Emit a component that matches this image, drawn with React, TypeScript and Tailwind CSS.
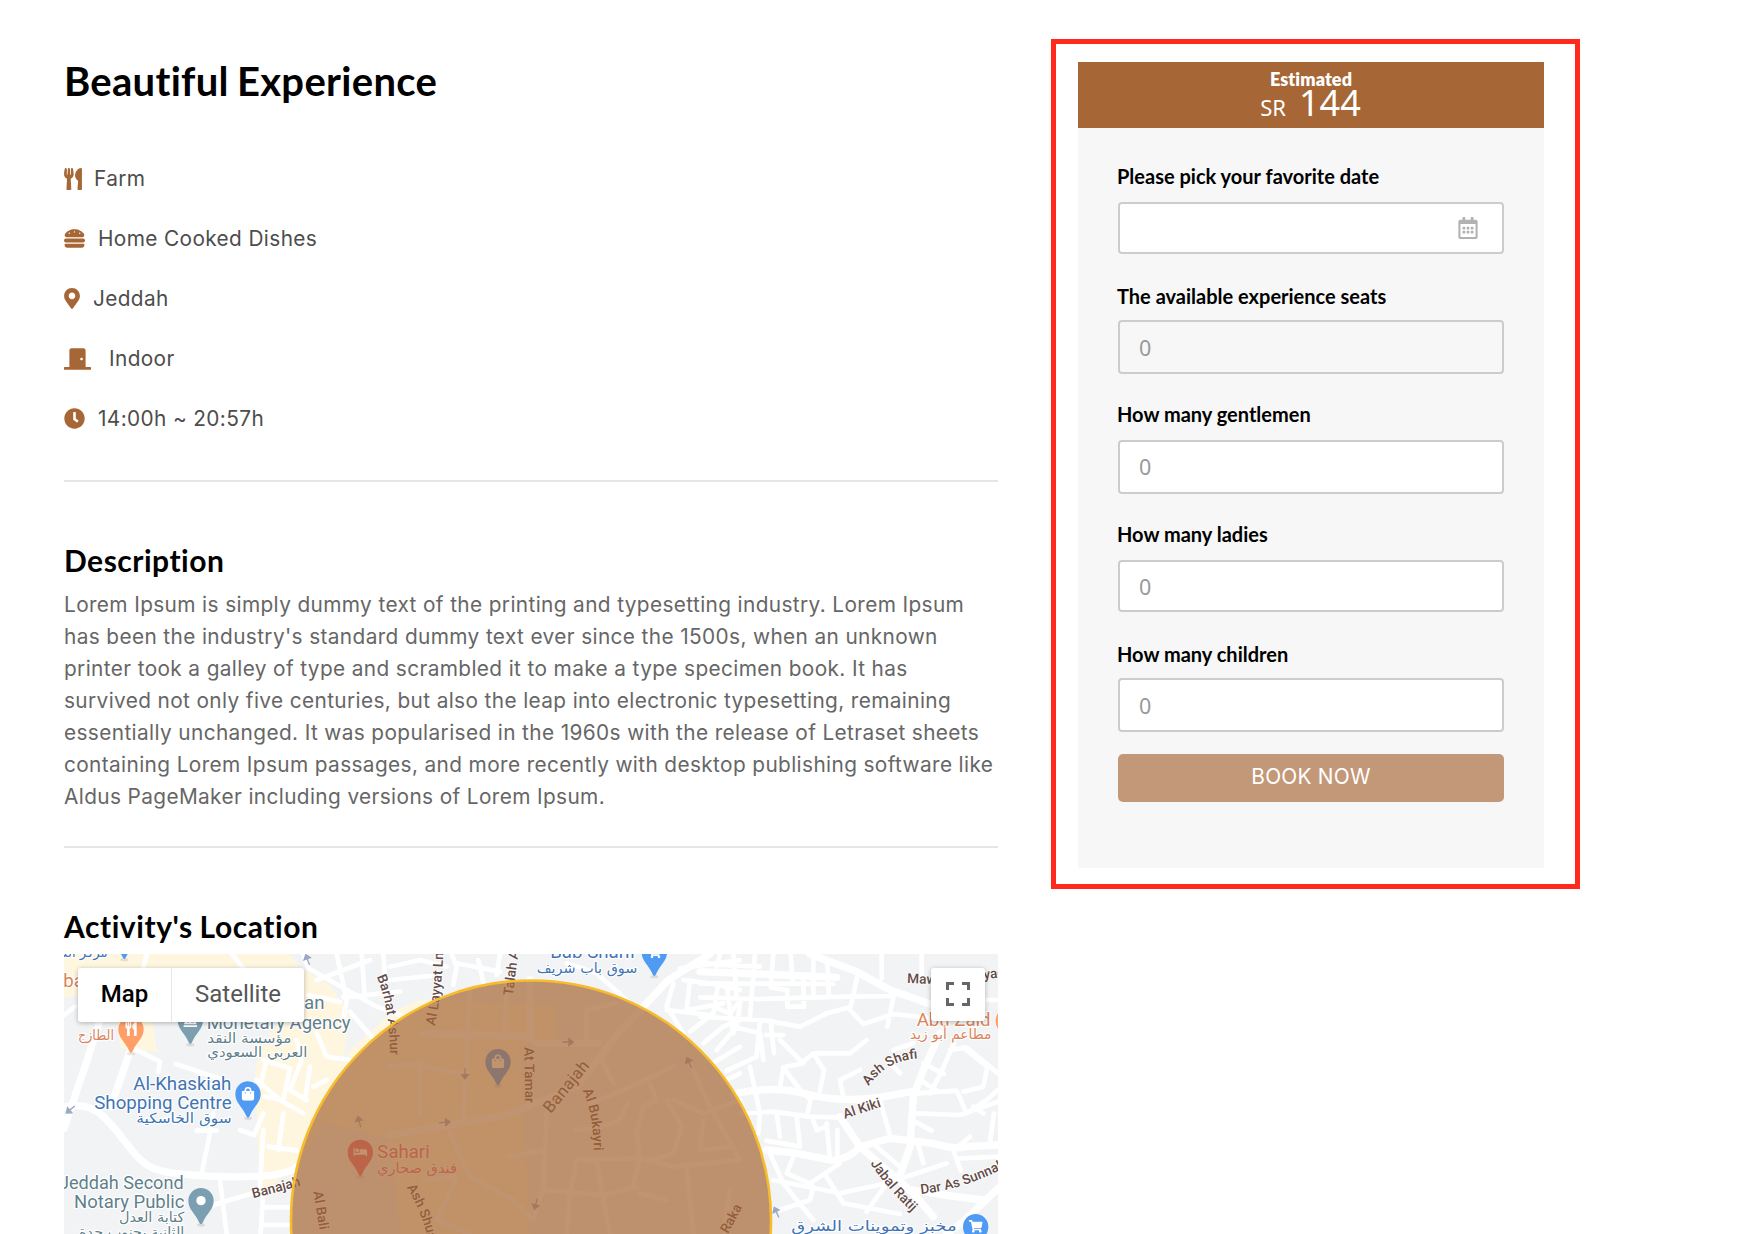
import type { ReactNode } from "react";
import type { IconType } from "react-icons";
import {
  FaBed,
  FaClock,
  FaDoorClosed,
  FaHamburger,
  FaLandmark,
  FaMapMarkerAlt,
  FaRegCalendarAlt,
  FaShoppingBag,
  FaShoppingCart,
  FaUtensils,
} from "react-icons/fa";

const details: { icon: IconType; text: string; iconClass: string }[] = [
  { icon: FaUtensils, text: "Farm", iconClass: "mr-3 h-[22px] w-[18px]" },
  { icon: FaHamburger, text: "Home Cooked Dishes", iconClass: "mr-[13px] h-[21px] w-[21px]" },
  { icon: FaMapMarkerAlt, text: "Jeddah", iconClass: "mr-[13px] h-[21px] w-4" },
  { icon: FaDoorClosed, text: "Indoor", iconClass: "mr-[18px] h-[22px] w-[27px]" },
  { icon: FaClock, text: "14:00h ~ 20:57h", iconClass: "mr-[13px] h-[21px] w-[21px]" },
];

const fields = [
  { label: "Please pick your favorite date", group: "h-[120px]", box: "mt-3.5 h-[52px] bg-white", date: true },
  { label: "The available experience seats", group: "h-[118px]", box: "mt-3 h-[54px] bg-[#f7f7f7] pt-0.5" },
  { label: "How many gentlemen", group: "h-[120px]", box: "mt-3.5 h-[54px] bg-white" },
  { label: "How many ladies", group: "h-[120px]", box: "mt-3.5 h-[52px] bg-white pt-px" },
  { label: "How many children", group: "h-[90px]", box: "mt-3 h-[54px] bg-white pt-0.5" },
];

/* ---------- map drawing ---------- */

const westWide =
  "M42,622 Q100,605 150,640 C210,690 245,770 300,800 Q340,825 520,830 T740,800 M245,440 L182,620 M42,685 L115,470 L150,360";
const westNarrow =
  "M240,440 L330,485 L325,515 M378,492 L520,540 M490,640 L480,700 L455,820 M440,692 L500,692 M290,162 L280,204 M545,162 L580,204 M42,345 L75,320 M510,840 L530,1002 M480,918 L640,870 L730,850 M640,870 L632,1002 M640,922 L722,922 M640,975 L722,975 M640,480 L720,505 L700,600 L645,590 M740,420 L755,480 L720,570 L770,600 M780,500 L765,600 M620,540 L690,600 L760,640 M640,690 L630,860 M570,690 L612,705 L640,640 M700,640 L685,750 M655,740 L740,752 M650,480 L630,560 M800,400 L830,470 L900,480 M790,560 L830,540 M760,162 L775,205 L980,320 L1050,345 M860,162 L890,300 L880,360 M800,240 L960,180 M935,162 L945,300 M775,285 L870,305 M880,292 L1050,275 M965,410 L900,335 M1000,162 L1010,300";
const centreWide =
  "M100,400 L420,410 L440,430 L625,430 M0,705 L240,665 L340,648 L560,560 L680,405 L835,240 L960,162 M420,240 V410";
const centreNarrow =
  "M0,200 L90,180 L170,200 M0,240 L150,225 M200,190 L330,215 M185,162 L200,200 L190,255 M265,180 L280,250 M330,162 L320,225 M240,270 L220,660 M350,250 L345,400 M590,430 L590,330 L680,310 M850,250 L830,320 L880,400 M630,470 L670,550 M600,610 L700,570 L850,500 M470,640 L460,860 L430,960 M555,690 L620,685 L690,660 L712,610 M780,550 L800,600 L760,620 L740,700 L750,780 L730,850 M560,780 L750,775 L850,800 L1050,780 M560,780 L540,880 L530,1002 M460,870 L640,885 L740,860 M620,790 L660,1002 M830,600 L875,680 L850,760 L790,780 M850,600 L940,640 L1050,600 M900,490 L960,620 L1050,780 M940,660 L930,750 L1030,740 M890,810 L910,1002 M180,700 L240,830 L370,900 L430,960 M360,770 L460,750 M100,840 L200,830 L140,960 L240,1002 M750,880 L830,900 M1000,1002 L1020,870 M530,190 L620,220 L720,310 M880,240 L960,250 L1050,270 M900,240 L890,330 L1000,310 M830,330 L960,345 M940,430 L1000,380 L1050,360 M900,395 L970,340 L985,250 M975,485 L1050,440 M1000,545 L1050,520 M870,205 L1050,180 M1010,260 L1030,400 M100,500 L210,520 M0,500 L90,490 L90,640";
const eastWide =
  "M330,162 L470,215 L570,270 L700,315 M0,215 L180,222 L410,232 M200,750 L280,758 L400,782 Q450,775 480,740 L570,715 L700,730 Q760,750 800,740 L894,735 M420,650 L480,740 L560,810 L640,880 L700,950 M540,592 L650,572 M720,400 L670,510 L640,590 L630,740 L595,840 M894,865 L790,965 L740,1002 M640,870 L730,885 L850,900 M100,582 Q220,555 320,582 T540,592";
const eastNarrow =
  "M0,185 L60,195 L180,200 M0,250 L400,252 M0,292 L180,297 L440,290 L580,288 M60,162 L50,200 M100,162 L110,292 M165,162 L150,350 M220,162 L212,262 L262,270 L262,320 L312,320 L310,240 M272,162 L278,240 M340,180 L340,290 M382,190 L387,290 M545,162 V235 M665,162 V235 M475,215 L450,330 L490,372 M450,322 L380,340 L300,380 L200,362 L0,350 M40,320 L90,340 L122,300 L110,380 L50,450 M100,380 L180,400 L190,480 M582,282 L562,380 M490,372 L580,342 L700,355 M500,420 L450,460 L340,460 L310,485 M340,460 L372,510 L360,572 M180,360 L170,470 L80,512 M212,362 L222,460 M198,405 H250 M240,420 L290,470 L310,490 L250,502 L240,560 M250,502 L300,570 L332,600 L320,650 M430,590 L420,540 L480,510 M150,500 L180,640 L175,700 M120,640 L220,635 L330,650 L420,652 M540,602 L572,712 M762,430 L722,520 L690,580 M670,490 L732,522 M660,540 L712,572 M650,580 L770,572 L800,640 L860,600 L894,570 M650,640 L780,645 L894,605 M645,665 L695,692 M780,735 L810,710 M760,752 L782,812 M780,775 L894,770 M380,670 L390,780 M335,650 L350,690 L380,680 M230,640 L240,710 M290,650 L300,740 L200,722 M412,690 V775 M210,760 L250,850 L290,900 L340,960 M280,770 L260,820 L330,850 L420,790 M220,840 L420,880 L560,850 L740,790 M560,850 L500,935 M340,860 L330,900 L240,930 M380,830 L430,910 L600,942 M750,450 L800,442 L894,520 M790,442 L862,500 L850,560 L790,575 M882,640 L870,725 M520,732 L600,800 M654,732 L670,790 M600,520 L560,480 M580,450 L640,430 M850,300 V350 M700,300 H894 M820,620 L850,640";

type Colour = "blue" | "orange" | "teal" | "red";

const pinFill: Record<Colour, string> = {
  blue: "fill-[#4f9af2]",
  orange: "fill-[#ff9e67]",
  teal: "fill-[#7b9eb0]",
  red: "fill-[#ee5f72]",
};

function Pin({ x, y, colour, icon: Icon }: { x: number; y: number; colour: Colour; icon?: IconType }) {
  return (
    <g transform={`translate(${x} ${y})`}>
      <ellipse cx="0" cy="73" rx="12" ry="5" className="fill-black/10" />
      <path
        d="M-38,0 A38,38 0 1 1 38,0 C38,26 18,36 5,66 Q0,76 -5,66 C-18,36 -38,26 -38,0Z"
        className={pinFill[colour]}
      />
      {Icon ? <Icon x={-21} y={-22} size={42} className="text-white" /> : <circle r="14" className="fill-white" />}
    </g>
  );
}

function Place({
  x,
  y,
  end,
  arabic,
  className,
  length,
  children,
}: {
  x: number;
  y: number;
  end?: boolean;
  arabic?: boolean;
  className: string;
  length?: number;
  children: ReactNode;
}) {
  return (
    <text
      x={x}
      y={y}
      textAnchor={end ? "end" : "start"}
      textLength={length}
      lengthAdjust="spacingAndGlyphs"
      strokeWidth="7"
      strokeLinejoin="round"
      className={`stroke-white [paint-order:stroke] ${arabic ? "font-['DejaVu_Sans',sans-serif] text-[42px]" : "font-[Roboto,sans-serif] text-[56px]"} ${className}`}
    >
      {children}
    </text>
  );
}

function Street({ id, d, large, children }: { id: string; d: string; large?: boolean; children: ReactNode }) {
  return (
    <>
      <path id={id} d={d} className="fill-none" />
      <text
        strokeWidth="5"
        className={`fill-[#654b47] stroke-white/80 font-[Roboto,sans-serif] [paint-order:stroke] ${large ? "text-[50px] tracking-[1px]" : "text-[41px] font-medium"}`}
      >
        <textPath href={`#${id}`}>{children}</textPath>
      </text>
    </>
  );
}

function Arrow({ x, y, angle }: { x: number; y: number; angle: number }) {
  return (
    <path
      transform={`translate(${x} ${y}) rotate(${angle})`}
      d="M-16,0 H6 M4,-10 L17,0 L4,10Z"
      strokeWidth="4"
      className="fill-[#9aa8c4] stroke-[#9aa8c4]"
    />
  );
}

function Roads({ wide, narrow }: { wide: string; narrow: string }) {
  return (
    <g className="fill-none stroke-white" strokeLinejoin="round" strokeLinecap="round">
      <path d={narrow} strokeWidth="14" />
      <path d={wide} strokeWidth="22" />
    </g>
  );
}

function LocationMap() {
  return (
    <div className="relative mt-2.5 h-[280px] w-[934px] overflow-hidden bg-[#f1f3f4]">
      <svg viewBox="64 954 934 280" className="block h-[280px] w-[934px]">
        {/* commercial areas */}
        <g className="fill-[#fff6e0]">
          <path d="M64,954 H290 L300,968 L330,985 L350,1015 L338,1100 L300,1160 L262,1195 L258,1150 L255,1070 L265,1040 L285,1015 L270,985 L64,997Z" />
          <path d="M118,1022 H153 L157,1052 L120,1048Z" />
          <path d="M395,1010 L420,1000 L555,1005 L555,1038 L520,1045 L530,1234 H400 L390,1140 L320,1120 L350,1050Z" />
        </g>
        <g transform="translate(50 900) scale(0.33333)">
          <Roads wide={westWide} narrow={westNarrow} />
        </g>
        <g transform="translate(390 900) scale(0.33333)">
          <Roads wide={centreWide} narrow={centreNarrow} />
        </g>
        <g transform="translate(700 900) scale(0.33333)">
          <Roads wide={eastWide} narrow={eastNarrow} />
        </g>

        <g transform="translate(50 900) scale(0.33333)">
          <Arrow x={62} y={628} angle={140} />
          <Arrow x={773} y={180} angle={-110} />
          <Arrow x={928} y={666} angle={-105} />
          <Street id="barhat" d="M980,230 Q1020,320 1020,480">Barhat Ashur</Street>
          <Street id="banajah-w" d="M610,895 L760,855">Banajah</Street>
          <Street id="bali" d="M790,875 L812,1010">Al Bali</Street>
          <Place x={173} y={172} end arabic className="fill-[#4174b4]" length={140}>مركز الذ</Place>
          <Pin x={223} y={106} colour="blue" />
          <Place x={40} y={262} className="fill-[#d9845c]">ba</Place>
          <Place x={762} y={327} className="fill-[#5f7f8c]">an</Place>
          <Place x={470} y={386} className="fill-[#5f7f8c]" length={432}>Monetary Agency</Place>
          <Place x={724} y={428} end arabic className="fill-[#5f7f8c]" length={252}>مؤسسة النقد</Place>
          <Place x={772} y={472} end arabic className="fill-[#5f7f8c]" length={300}>العربي السعودي</Place>
          <Pin x={421} y={361} colour="teal" icon={FaLandmark} />
          <Pin x={243} y={388} colour="orange" icon={FaUtensils} />
          <Place x={192} y={420} end arabic className="fill-[#d9845c]" length={108}>الطازج</Place>
          <Place x={544} y={571} end className="fill-[#4174b4]">Al-Khaskiah</Place>
          <Place x={545} y={627} end className="fill-[#4174b4]">Shopping Centre</Place>
          <Place x={545} y={670} end arabic className="fill-[#4174b4]" length={286}>سوق الخاسكية</Place>
          <Pin x={594} y={582} colour="blue" icon={FaShoppingBag} />
          <Place x={401} y={867} end className="fill-[#5f7f8c]" length={374}>Jeddah Second</Place>
          <Place x={403} y={923} end className="fill-[#5f7f8c]" length={331}>Notary Public</Place>
          <Place x={403} y={966} end arabic className="fill-[#5f7f8c]" length={196}>كتابة العدل</Place>
          <Place x={403} y={1010} end arabic className="fill-[#5f7f8c]" length={316}>الثانية بجنوب جدة</Place>
          <Pin x={453} y={902} colour="teal" />
          <Pin x={931} y={757} colour="red" icon={FaBed} />
        </g>

        <g transform="translate(390 900) scale(0.33333)">
          <Arrow x={533} y={426} angle={0} />
          <Arrow x={225} y={520} angle={90} />
          <Arrow x={163} y={667} angle={-5} />
          <Arrow x={438} y={911} angle={105} />
          <Arrow x={898} y={489} angle={-115} />
          <Street id="layyat" d="M134,378 Q157,280 161,120">Al Layyat Ln</Street>
          <Street id="talah" d="M368,288 L392,110">Talah Al</Street>
          <Street id="tamar" d="M403,442 L406,640">At Tamar</Street>
          <Street id="banajah" d="M482,642 L640,450" large>Banajah</Street>
          <Street id="bukayri" d="M578,572 Q610,640 612,760">Al Bukayri</Street>
          <Street id="shua" d="M50,862 Q105,950 122,1060">Ash Shuara</Street>
          <Street id="raka" d="M1014,1002 L1084,870">Raka</Street>
          <Place x={-38} y={773} className="fill-[#ee5f72] stroke-none" length={157}>Sahari</Place>
          <Place x={201} y={818} end arabic className="fill-[#ee5f72] stroke-none" length={240}>فندق صحاري</Place>
          <Place x={738} y={174} end className="fill-[#4174b4]">Bab Sharif</Place>
          <Place x={742} y={220} end arabic className="fill-[#4174b4]" length={302}>سوق باب شريف</Place>
          <Pin x={324} y={485} colour="blue" icon={FaShoppingBag} />
          <Pin x={793} y={157} colour="blue" icon={FaShoppingCart} />
        </g>

        <g transform="translate(700 900) scale(0.33333)">
          <Arrow x={230} y={938} angle={-115} />
          <Street id="maw" d="M621,249 L700,252">Maw</Street>
          <Street id="ya" d="M852,238 L960,225">yad</Street>
          <Street id="shafi" d="M506,558 Q560,482 650,476">Ash Shafi</Street>
          <Street id="kiki" d="M434,656 L560,615">Al Kiki</Street>
          <Street id="jabal" d="M511,790 Q560,865 650,950">Jabal Ratij</Street>
          <Street id="dar" d="M663,882 Q790,870 930,795">Dar As Sunnah</Street>
          <Place x={872} y={378} end className="fill-[#d9845c]">Abu Zaid</Place>
          <Place x={874} y={418} end arabic className="fill-[#d9845c]" length={244}>مطاعم أبو زيد</Place>
          <Pin x={925} y={362} colour="orange" icon={FaUtensils} />
          <Place x={770} y={992} end arabic className="fill-[#4174b4]" length={496}>مخبز وتموينات الشرق</Place>
          <Pin x={827} y={980} colour="blue" icon={FaShoppingCart} />
        </g>

        <circle cx="531" cy="1220.5" r="240" strokeWidth="2.6" className="fill-[#a66635]/70 stroke-[#f7bb2c]" />
      </svg>

      <div className="absolute top-3.5 left-3.5 flex h-[54px] w-[226px] rounded-[3px] bg-white pb-[3px] font-[Roboto,sans-serif] text-2xl shadow-[0_1px_5px_rgba(0,0,0,0.28)]">
        <button className="w-[93px] font-medium text-black">Map</button>
        <button className="-mb-[3px] flex-1 border-l border-[#e6e6e6] pb-[3px] text-[#565656]">Satellite</button>
      </div>
      <div className="absolute top-3.5 right-[13px] flex h-[53px] w-[54px] items-center justify-center rounded-[3px] bg-white pb-px shadow-[0_1px_5px_rgba(0,0,0,0.28)]">
        <svg viewBox="0 0 24 24" className="h-6 w-6 fill-none stroke-[#666]" strokeWidth="3">
          <path d="M1.5,8 V1.5 H8 M16,1.5 H22.5 V8 M22.5,16 V22.5 H16 M8,22.5 H1.5 V16" />
        </svg>
      </div>
    </div>
  );
}

function BookingForm() {
  return (
    <aside className="mt-[39px] ml-[53px] h-[850px] w-[529px] border-5 border-[#ff2a1c] bg-white pt-[18px] pl-[22px]">
      <div className="h-[806px] w-[466px] bg-[#f7f7f7]">
        <header className="flex h-[66px] flex-col items-center bg-[#a66635] pt-2 text-white">
          <div className="text-lg leading-[18px] font-extrabold tracking-[0.1px]">Estimated</div>
          <div className="-mt-[3px] flex items-baseline gap-[13px] pr-px font-['Noto_Sans',sans-serif]">
            <span className="text-[22px] leading-none">SR</span>
            <span className="text-4xl leading-9">144</span>
          </div>
        </header>
        <form className="px-10 pt-9">
          {fields.map((f) => (
            <div key={f.label} className={f.group}>
              <label className="-ml-px block h-6 text-xl leading-6 font-bold text-black">{f.label}</label>
              <div className={`flex items-center rounded-[4px] border-2 border-[#ccc] ${f.box}`}>
                {f.date ? (
                  <FaRegCalendarAlt className="mr-6 ml-auto h-[22px] w-5 text-[#b2b2b2]" />
                ) : (
                  <span className="pl-[19px] font-['Noto_Sans',sans-serif] text-[21.5px] leading-none text-[#999]">0</span>
                )}
              </div>
            </div>
          ))}
          <button
            type="button"
            className="mt-[22px] block h-12 w-full rounded-[5px] bg-[#c39878] pb-[3px] font-[Inter,sans-serif] text-[20.8px] tracking-[0.25px] text-white"
          >
            BOOK NOW
          </button>
        </form>
      </div>
    </aside>
  );
}

export default function App() {
  return (
    <div className="flex h-[1234px] items-start overflow-hidden bg-white pl-16 font-[Lato,sans-serif]">
      <main className="w-[934px] shrink-0">
        <h1 className="mt-[57px] h-12 text-[40px] leading-[48px] font-bold tracking-[0.3px] [word-spacing:-2px] text-black">
          Beautiful Experience
        </h1>
        <ul className="mt-11">
          {details.map(({ icon: Icon, text, iconClass }) => (
            <li key={text} className="flex h-[60px] items-center pb-px font-[Inter,sans-serif] text-[20.8px] tracking-[0.38px] text-[#4d4d4d]">
              <Icon className={`text-[#a66635] ${iconClass}`} />
              <span className="pt-px">{text}</span>
            </li>
          ))}
        </ul>
        <hr className="mt-[31px] border-t-2 border-[#e5e5e5]" />
        <h2 className="mt-[60px] h-9 text-[30px] leading-9 font-bold tracking-[0.5px] text-black">Description</h2>
        <p className="mt-[11px] font-[Inter,sans-serif] text-[20.8px] leading-8 tracking-[0.38px] whitespace-nowrap text-[#666]">
          Lorem Ipsum is simply dummy text of the printing and typesetting industry. Lorem Ipsum
          <br />
          has been the industry's standard dummy text ever since the 1500s, when an unknown
          <br />
          printer took a galley of type and scrambled it to make a type specimen book. It has
          <br />
          survived not only five centuries, but also the leap into electronic typesetting, remaining
          <br />
          essentially unchanged. It was popularised in the 1960s with the release of Letraset sheets
          <br />
          containing Lorem Ipsum passages, and more recently with desktop publishing software like
          <br />
          Aldus PageMaker including versions of Lorem Ipsum.
        </p>
        <hr className="mt-[33px] border-t-2 border-[#e5e5e5]" />
        <h2 className="mt-[60px] h-9 text-[30px] leading-9 font-bold tracking-[0.55px] [word-spacing:-1px] text-black">Activity's Location</h2>
        <LocationMap />
      </main>
      <BookingForm />
    </div>
  );
}
